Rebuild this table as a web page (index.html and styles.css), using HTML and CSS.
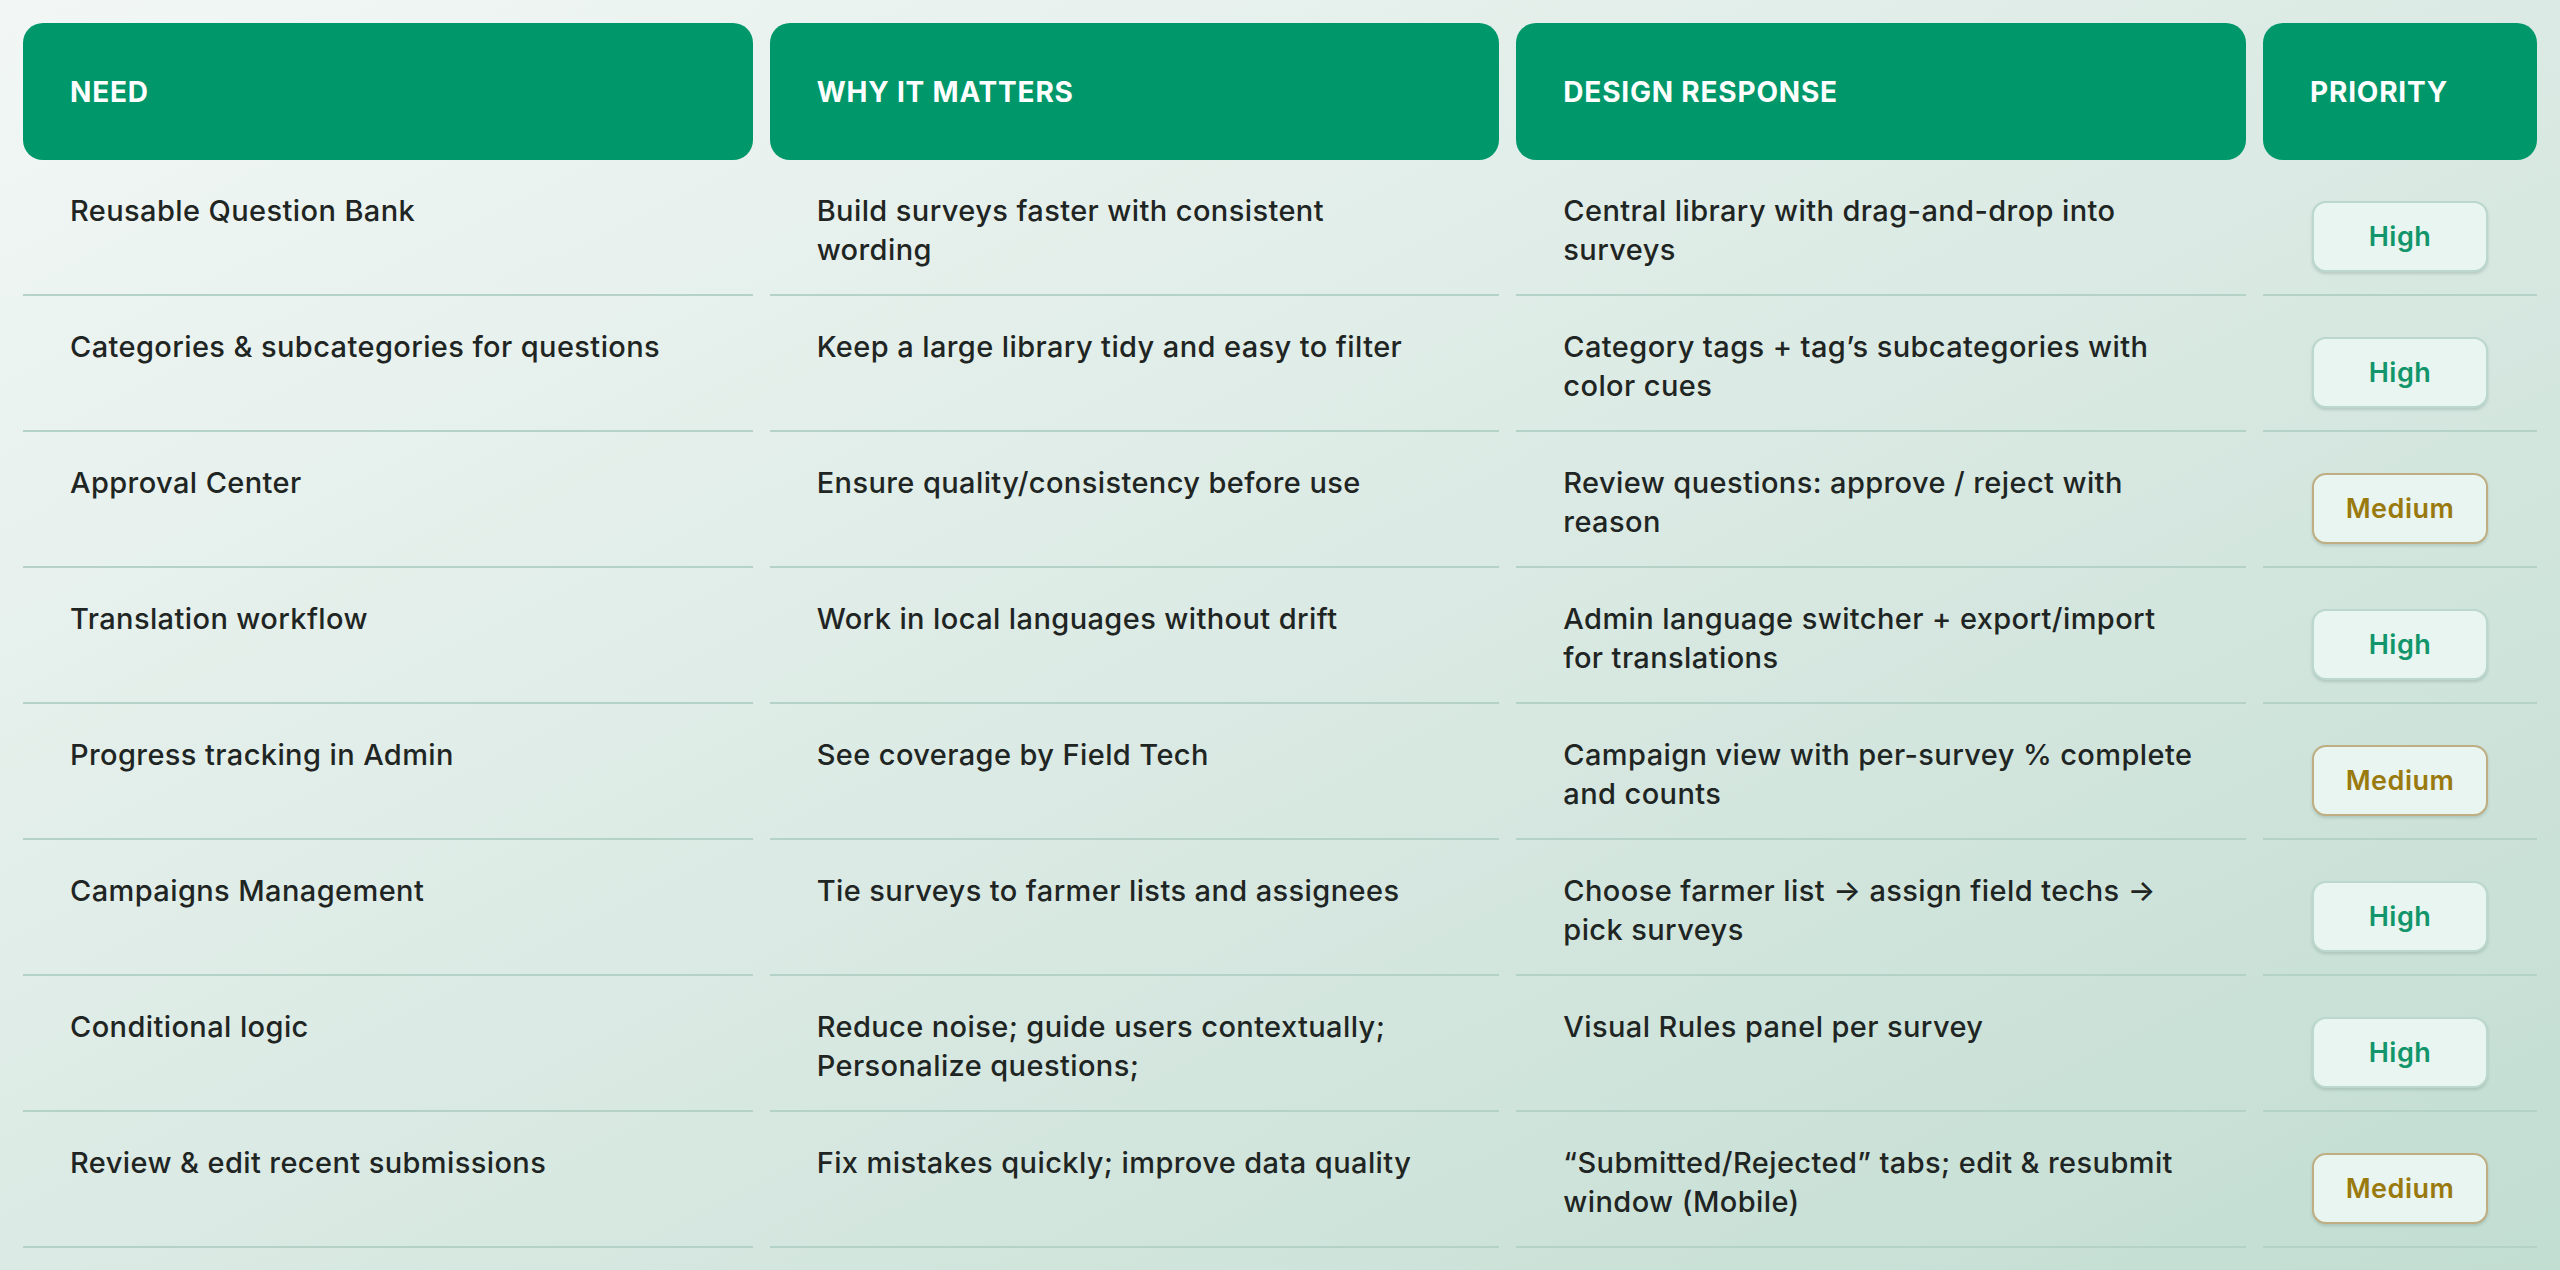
FILE: index.html
```html
<!DOCTYPE html>
<html lang="en">
<head>
<meta charset="utf-8">
<title>Needs and design responses</title>
<link rel="stylesheet" href="styles.css">
</head>
<body>
<main class="page">
  <div class="table">
    <div class="th">NEED</div>
    <div class="th">WHY IT MATTERS</div>
    <div class="th">DESIGN RESPONSE</div>
    <div class="th">PRIORITY</div>

    <div class="td">Reusable Question Bank</div>
    <div class="td td-why">Build surveys faster with consistent wording</div>
    <div class="td">Central library with drag-and-drop into surveys</div>
    <div class="td td-pri"><span class="badge badge-high">High</span></div>

    <div class="td">Categories &amp; subcategories for questions</div>
    <div class="td td-why">Keep a large library tidy and easy to filter</div>
    <div class="td">Category tags + tag’s subcategories with color cues</div>
    <div class="td td-pri"><span class="badge badge-high">High</span></div>

    <div class="td">Approval Center</div>
    <div class="td td-why">Ensure quality/consistency before use</div>
    <div class="td">Review questions: approve / reject with reason</div>
    <div class="td td-pri"><span class="badge badge-med">Medium</span></div>

    <div class="td">Translation workflow</div>
    <div class="td td-why">Work in local languages without drift</div>
    <div class="td">Admin language switcher + export/import for translations</div>
    <div class="td td-pri"><span class="badge badge-high">High</span></div>

    <div class="td">Progress tracking in Admin</div>
    <div class="td td-why">See coverage by Field Tech</div>
    <div class="td">Campaign view with per-survey % complete and counts</div>
    <div class="td td-pri"><span class="badge badge-med">Medium</span></div>

    <div class="td">Campaigns Management</div>
    <div class="td td-why">Tie surveys to farmer lists and assignees</div>
    <div class="td">Choose farmer list → assign field techs → pick surveys</div>
    <div class="td td-pri"><span class="badge badge-high">High</span></div>

    <div class="td">Conditional logic</div>
    <div class="td td-why">Reduce noise; guide users contextually; Personalize questions;</div>
    <div class="td">Visual Rules panel per survey</div>
    <div class="td td-pri"><span class="badge badge-high">High</span></div>

    <div class="td">Review &amp; edit recent submissions</div>
    <div class="td td-why">Fix mistakes quickly; improve data quality</div>
    <div class="td">“Submitted/Rejected” tabs; edit &amp; resubmit window (Mobile)</div>
    <div class="td td-pri"><span class="badge badge-med">Medium</span></div>
  </div>
</main>
</body>
</html>
```

FILE: styles.css
```css
* { box-sizing: border-box; }

html, body {
  margin: 0;
  padding: 0;
  height: 100%;
}

body {
  background: linear-gradient(to bottom right, #f2f7f5 0%, #dbeae4 50%, #c2ddd2 100%);
  font-family: Inter, "Noto Sans", "Liberation Sans", sans-serif;
  color: #1f2523;
  overflow: hidden;
}

.page {
  padding: 23px 23px 0 23px;
}

.table {
  display: grid;
  grid-template-columns: 1fr 1fr 1fr 274px;
  column-gap: 17px;
}

.th {
  height: 137px;
  background: #00986a;
  border-radius: 20px;
  color: #ffffff;
  font-weight: 700;
  font-size: 28px;
  letter-spacing: 0.8px;
  display: flex;
  align-items: center;
  padding-left: 47px;
}

.td {
  padding: 31px 46px 25px 47px;
  border-bottom: 2px solid #b5d2c8;
  font-size: 29px;
  line-height: 39px;
  font-weight: 500;
  letter-spacing: 0.4px;
}

.td-why {
  padding-right: 62px;
}

.td-pri {
  padding: 41px 0 0 0;
  display: flex;
  justify-content: center;
  align-items: flex-start;
}

.badge {
  width: 176px;
  height: 71px;
  border-radius: 14px;
  display: flex;
  align-items: center;
  justify-content: center;
  font-size: 27px;
  font-weight: 600;
  letter-spacing: 0.5px;
  background: #e8f5f0;
  box-shadow: 0 2px 3px rgba(40, 80, 65, 0.18);
}

.badge-high {
  color: #12956a;
  border: 2px solid #bcd7cd;
}

.badge-med {
  color: #9a7a0e;
  border: 2px solid #bfae82;
}
```
